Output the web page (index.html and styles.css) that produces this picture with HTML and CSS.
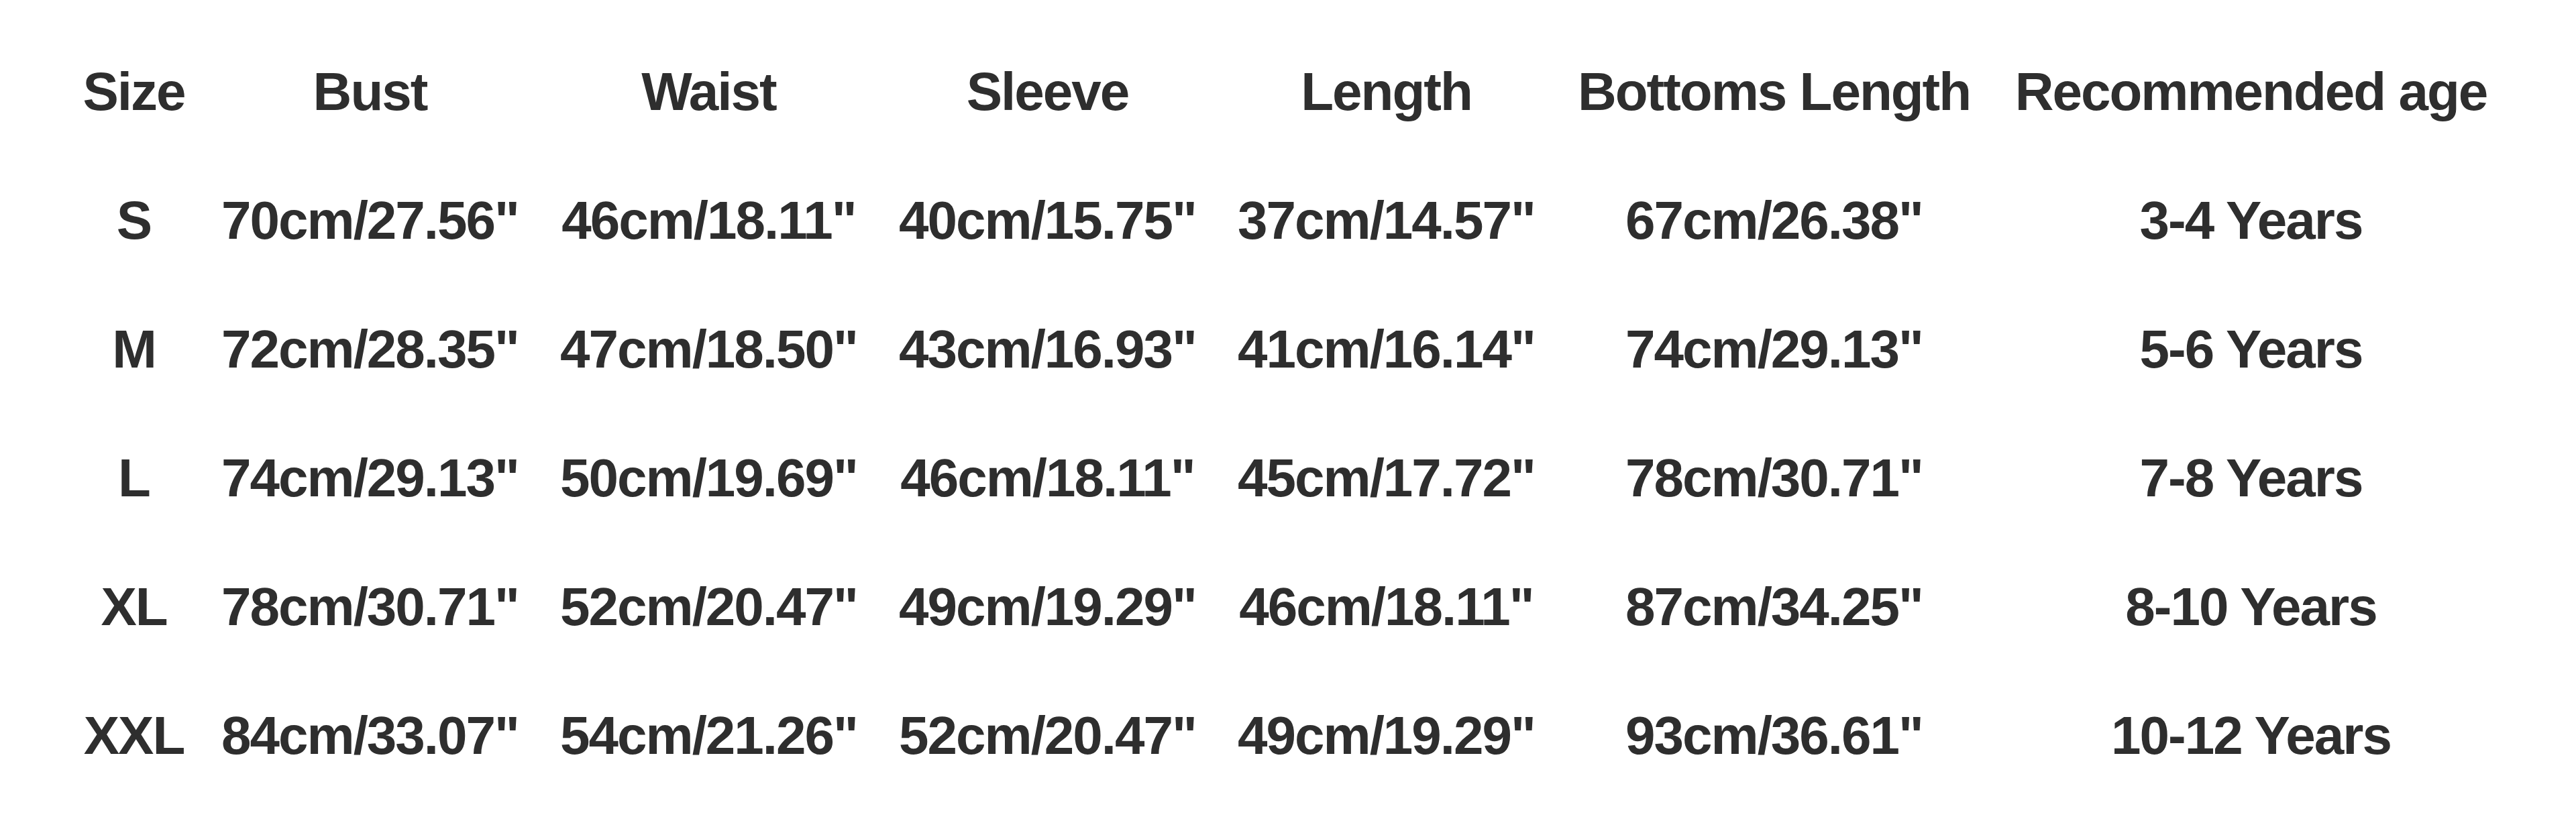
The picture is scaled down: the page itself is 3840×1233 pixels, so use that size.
FILE: index.html
```html
<!DOCTYPE html>
<html lang="en">
<head>
<meta charset="utf-8">
<title>Size Chart</title>
<link rel="stylesheet" href="styles.css">
</head>
<body>
<div class="chart">
  <div class="cell head">Size</div>
  <div class="cell head">Bust</div>
  <div class="cell head">Waist</div>
  <div class="cell head">Sleeve</div>
  <div class="cell head">Length</div>
  <div class="cell head">Bottoms Length</div>
  <div class="cell head">Recommended age</div>

  <div class="cell">S</div>
  <div class="cell">70cm/27.56"</div>
  <div class="cell">46cm/18.11"</div>
  <div class="cell">40cm/15.75"</div>
  <div class="cell">37cm/14.57"</div>
  <div class="cell">67cm/26.38"</div>
  <div class="cell">3-4 Years</div>

  <div class="cell">M</div>
  <div class="cell">72cm/28.35"</div>
  <div class="cell">47cm/18.50"</div>
  <div class="cell">43cm/16.93"</div>
  <div class="cell">41cm/16.14"</div>
  <div class="cell">74cm/29.13"</div>
  <div class="cell">5-6 Years</div>

  <div class="cell">L</div>
  <div class="cell">74cm/29.13"</div>
  <div class="cell">50cm/19.69"</div>
  <div class="cell">46cm/18.11"</div>
  <div class="cell">45cm/17.72"</div>
  <div class="cell">78cm/30.71"</div>
  <div class="cell">7-8 Years</div>

  <div class="cell">XL</div>
  <div class="cell">78cm/30.71"</div>
  <div class="cell">52cm/20.47"</div>
  <div class="cell">49cm/19.29"</div>
  <div class="cell">46cm/18.11"</div>
  <div class="cell">87cm/34.25"</div>
  <div class="cell">8-10 Years</div>

  <div class="cell">XXL</div>
  <div class="cell">84cm/33.07"</div>
  <div class="cell">54cm/21.26"</div>
  <div class="cell">52cm/20.47"</div>
  <div class="cell">49cm/19.29"</div>
  <div class="cell">93cm/36.61"</div>
  <div class="cell">10-12 Years</div>
</div>
</body>
</html>
```

FILE: styles.css
```css
html, body {
  margin: 0;
  padding: 0;
  background: #ffffff;
}

body {
  font-family: "Liberation Sans", Arial, sans-serif;
  color: #2e2e2e;
}

.chart {
  display: grid;
  grid-template-columns: 199px 505px 505px 505px 505px 651px 771px;
  grid-auto-rows: 192px;
  padding: 41px 0 0 100px;
}

.cell {
  font-size: 80px;
  font-weight: 700;
  line-height: 192px;
  letter-spacing: -2px;
  text-align: center;
  white-space: nowrap;
}
```
